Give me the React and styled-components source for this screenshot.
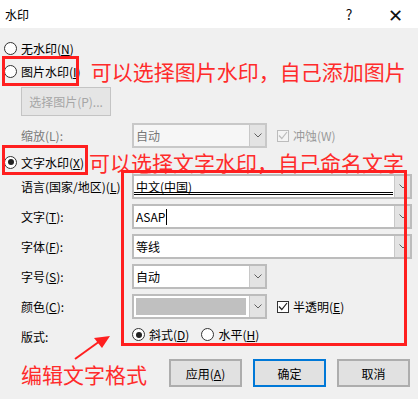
import React from 'react';
import styled, { createGlobalStyle, css } from 'styled-components';

const GlobalStyle = createGlobalStyle`
  html, body {
    margin: 0;
    padding: 0;
    background: #f0f0f0;
  }
  body {
    font-family: "Noto Sans CJK SC", "Noto Sans", sans-serif;
    font-size: 12px;
    color: #000;
  }
`;

const Dialog = styled.div`
  position: relative;
  width: 418px;
  height: 399px;
  background: #f0f0f0;
  overflow: hidden;
`;

const TitleBar = styled.div`
  height: 28px;
  background: #fff;
  display: flex;
  align-items: center;
  padding-left: 5px;
`;

const Title = styled.span`
  flex: 1;
  font-size: 12px;
`;

const TitleButton = styled.span`
  width: 46px;
  text-align: center;
  font-size: ${(p) => p.$size || '13px'};
  color: #111;
  line-height: 1;
`;

const Body = styled.div`
  padding: 12px 0 0 4px;
`;

const Row = styled.div`
  display: flex;
  align-items: center;
  height: ${(p) => p.$h || 16}px;
  margin-top: ${(p) => p.$mt || 0}px;
`;

const RadioLabel = styled.label`
  display: inline-flex;
  align-items: center;
  gap: 4px;
  white-space: nowrap;
  color: ${(p) => (p.$disabled ? '#8a8a8a' : '#000')};
`;

const RadioDot = styled.span`
  width: 11px;
  height: 11px;
  border: 1px solid #333;
  border-radius: 50%;
  background: #fff;
  display: inline-flex;
  align-items: center;
  justify-content: center;
  flex: none;
  ${(p) =>
    p.$checked &&
    css`
      &::after {
        content: '';
        width: 6px;
        height: 6px;
        border-radius: 50%;
        background: #222;
      }
    `}
`;

const Note = styled.span`
  color: #ff2b2b;
  font-size: 21px;
  line-height: 24px;
  white-space: nowrap;
  margin-left: ${(p) => p.$ml || 0}px;
`;

const PickButton = styled.button`
  margin: 4px 0 0 17px;
  width: 90px;
  height: 29px;
  background: #e5e5e5;
  border: 1px solid #c4c4c4;
  color: #a6a6a6;
  font: inherit;
  padding: 0;
`;

const FieldLabel = styled.span`
  width: 128px;
  flex: none;
  padding-left: 17px;
  box-sizing: border-box;
  color: ${(p) => (p.$disabled ? '#7a7a7a' : '#000')};
  white-space: nowrap;
`;

const Form = styled.div`
  display: grid;
  grid-template-columns: 128px 280px;
  grid-auto-rows: 25px;
  row-gap: 5px;
  margin-top: 0;
  align-items: center;
`;

const Controls = styled.div`
  display: flex;
  align-items: center;
  gap: 10px;
  height: 25px;
`;

const Select = styled.div`
  display: flex;
  width: ${(p) => (p.$short ? 135 : 280)}px;
  height: 25px;
  box-sizing: border-box;
  border: 2px solid ${(p) => (p.$disabled ? '#c8c8c8' : '#bcbcbc')};
  background: ${(p) => (p.$disabled ? '#f6f6f6' : '#fff')};
  flex: none;
`;

const SelectValue = styled.div`
  position: relative;
  flex: 1;
  display: flex;
  align-items: center;
  padding-left: 2px;
  color: ${(p) => (p.$disabled ? '#777' : '#000')};
  white-space: nowrap;
  overflow: hidden;
`;

const DoubleRule = styled.span`
  position: absolute;
  left: 0;
  right: 1px;
  bottom: 2px;
  height: 1px;
  border-top: 1px solid #000;
  border-bottom: 1px solid #000;
`;

const Caret = styled.span`
  display: inline-block;
  width: 1px;
  height: 16px;
  background: #000;
  margin-left: 1px;
`;

const Swatch = styled.span`
  width: 110px;
  height: 17px;
  background: #c0c0c0;
`;

const DropButton = styled.div`
  width: 15px;
  flex: none;
  background: #e3e3e3;
  border-left: 1px solid #c8c8c8;
  display: flex;
  align-items: center;
  justify-content: center;
`;

const Check = styled.span`
  width: 12px;
  height: 12px;
  box-sizing: border-box;
  border: 1px solid ${(p) => (p.$disabled ? '#bcbcbc' : '#333')};
  background: ${(p) => (p.$disabled ? '#f4f4f4' : '#fff')};
  display: inline-flex;
  align-items: center;
  justify-content: center;
  flex: none;
`;

const CheckLabel = styled.label`
  display: inline-flex;
  align-items: center;
  gap: 4px;
  color: ${(p) => (p.$disabled ? '#9a9a9a' : '#000')};
  white-space: nowrap;
`;

const LayoutOptions = styled.div`
  display: flex;
  align-items: center;
  gap: 12px;
  margin-top: -4px;
`;

const Footer = styled.div`
  display: flex;
  align-items: center;
  margin-top: 10px;
  padding-right: 8px;
`;

const FooterNote = styled(Note)`
  flex: 1;
  margin-left: 17px;
  margin-top: 1px;
`;

const Buttons = styled.div`
  display: flex;
  gap: 11px;
`;

const DialogButton = styled.button`
  width: 73px;
  height: 28px;
  box-sizing: border-box;
  background: #e1e1e1;
  border: ${(p) => (p.$primary ? '2px solid #0078d7' : '2px solid #adadad')};
  font: inherit;
  color: #000;
  padding: 0;
`;

const Callout = styled.div`
  position: absolute;
  top: ${(p) => p.$top}px;
  left: ${(p) => p.$left}px;
  width: ${(p) => p.$w}px;
  height: ${(p) => p.$h}px;
  box-sizing: border-box;
  border: 3px solid #ff1f1f;
  pointer-events: none;
`;

const ArrowMark = styled.svg`
  position: absolute;
  left: 70px;
  top: 332px;
`;

const Chevron = ({ color = '#606060' }) => (
  <svg width="8" height="5" viewBox="0 0 8 5">
    <path d="M0.5 0.5 L4 4 L7.5 0.5" fill="none" stroke={color} strokeWidth="1" />
  </svg>
);

const Tick = ({ color = '#222' }) => (
  <svg width="10" height="9" viewBox="0 0 10 9">
    <path d="M1 4.5 L3.8 7.5 L9 1" fill="none" stroke={color} strokeWidth="1.2" />
  </svg>
);

const Radio = ({ checked, children, disabled }) => (
  <RadioLabel $disabled={disabled}>
    <RadioDot $checked={checked} />
    <span>{children}</span>
  </RadioLabel>
);

const Checkbox = ({ disabled, children }) => (
  <CheckLabel $disabled={disabled}>
    <Check $disabled={disabled}>
      <Tick color={disabled ? '#bcbcbc' : '#222'} />
    </Check>
    <span>{children}</span>
  </CheckLabel>
);

const Combo = ({ value, short, disabled, children }) => (
  <Select $short={short} $disabled={disabled}>
    <SelectValue $disabled={disabled}>{value}{children}</SelectValue>
    <DropButton>
      <Chevron />
    </DropButton>
  </Select>
);

const App = () => (
  <>
    <GlobalStyle />
    <Dialog>
      <TitleBar>
        <Title>水印</Title>
        <TitleButton $size="14px">?</TitleButton>
        <TitleButton $size="18px">✕</TitleButton>
      </TitleBar>

      <Body>
        <Row $h={16}>
          <Radio>无水印(<u>N</u>)</Radio>
        </Row>
        <Row $h={24} $mt={3}>
          <Radio>图片水印(<u>I</u>)</Radio>
          <Note $ml={10}>可以选择图片水印，自己添加图片</Note>
        </Row>

        <PickButton>选择图片(P)...</PickButton>

        <Row $h={25} $mt={7}>
          <FieldLabel $disabled>缩放(L):</FieldLabel>
          <Controls>
            <Combo value="自动" short disabled />
            <Checkbox disabled>冲蚀(W)</Checkbox>
          </Controls>
        </Row>

        <Row $h={24} $mt={2}>
          <Radio checked>文字水印(<u>X</u>)</Radio>
          <Note $ml={5}>可以选择文字水印，自己命名文字</Note>
        </Row>

        <Form>
          <FieldLabel>语言(国家/地区)(<u>L</u>):</FieldLabel>
          <Combo value="中文(中国)">
            <DoubleRule />
          </Combo>

          <FieldLabel>文字(<u>T</u>):</FieldLabel>
          <Combo value="ASAP">
            <Caret />
          </Combo>

          <FieldLabel>字体(<u>F</u>):</FieldLabel>
          <Combo value="等线" />

          <FieldLabel>字号(<u>S</u>):</FieldLabel>
          <Controls>
            <Combo value="自动" short />
          </Controls>

          <FieldLabel>颜色(<u>C</u>):</FieldLabel>
          <Controls>
            <Select $short>
              <SelectValue>
                <Swatch />
              </SelectValue>
              <DropButton>
                <Chevron />
              </DropButton>
            </Select>
            <Checkbox>半透明(<u>E</u>)</Checkbox>
          </Controls>

          <FieldLabel>版式:</FieldLabel>
          <LayoutOptions>
            <Radio checked>斜式(<u>D</u>)</Radio>
            <Radio>水平(<u>H</u>)</Radio>
          </LayoutOptions>
        </Form>

        <Footer>
          <FooterNote>编辑文字格式</FooterNote>
          <Buttons>
            <DialogButton>应用(<u>A</u>)</DialogButton>
            <DialogButton $primary>确定</DialogButton>
            <DialogButton>取消</DialogButton>
          </Buttons>
        </Footer>
      </Body>

      <Callout $top={56} $left={2} $w={77} $h={30} />
      <Callout $top={145} $left={2} $w={86} $h={30} />
      <Callout $top={170} $left={121} $w={286} $h={176} />
      <ArrowMark width="44" height="30" viewBox="0 0 44 30">
        <path d="M5 27 L30 9" stroke="#ff1f1f" strokeWidth="2" fill="none" />
        <path d="M40 4 L24 6 L32 16 Z" fill="#ff1f1f" />
      </ArrowMark>
    </Dialog>
  </>
);

export default App;
